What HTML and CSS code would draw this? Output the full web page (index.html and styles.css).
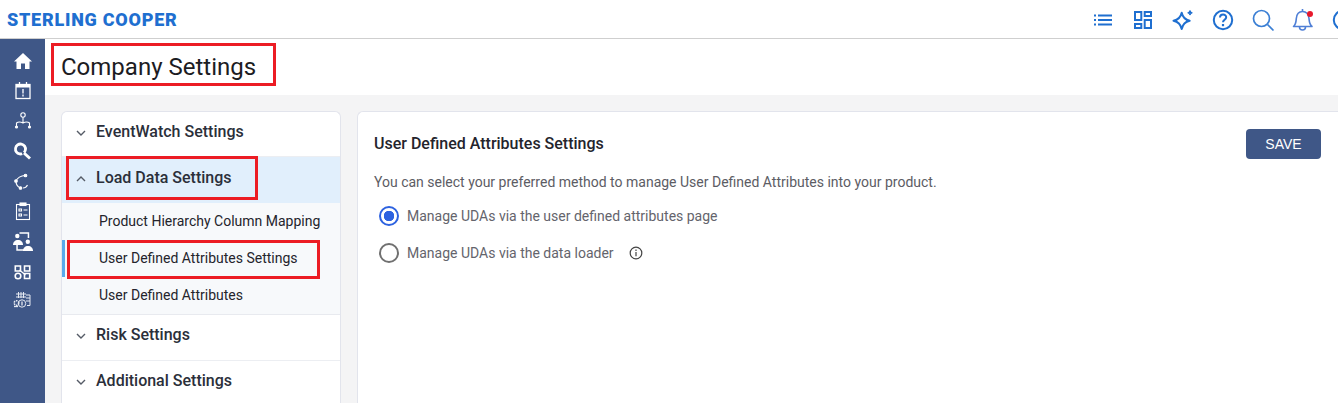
FILE: index.html
```html
<!DOCTYPE html>
<html lang="en">
<head>
    <meta charset="UTF-8">
    <meta name="viewport" content="width=device-width, initial-scale=1.0">
    <title>Company Settings</title>
    <link rel="stylesheet" href="styles.css">
</head>
<body>
    <!-- Top bar -->
    <header class="topbar">
        <div class="logo">STERLING COOPER</div>
        <div class="top-icons">
            <svg class="top-icon" viewBox="0 0 24 24"><path d="M3 7.500h2M7 7.500h14M3 12h2M7 12h14M3 16.500h2M7 16.500h14" fill="none" stroke="#1f6fd0" stroke-width="2"/></svg>
            <svg class="top-icon" viewBox="0 0 24 24" fill="none" stroke="#1f6fd0" stroke-width="2"><rect x="4" y="4" width="6.300" height="8"/><rect x="13.700" y="4" width="6.300" height="4"/><rect x="4" y="16" width="6.300" height="4"/><rect x="13.700" y="12" width="6.300" height="8"/></svg>
            <svg class="top-icon" viewBox="0 0 24 24"><path d="M10.700 4.700c1 4.500 3 7 8 8-5 1-7 3.500-8 8.300-1-4.800-3-7.300-8.200-8.300 5.200-1 7.200-3.500 8.200-8z" fill="none" stroke="#1f6fd0" stroke-width="2" stroke-linejoin="round"/><path d="M19 2.500l.8 1.500 1.500.8-1.500.8-.8 1.500-.8-1.500-1.500-.8 1.500-.8z" fill="#1f6fd0" stroke="#1f6fd0"/></svg>
            <svg class="top-icon" viewBox="0 0 24 24" fill="none" stroke="#1f6fd0" stroke-width="2"><circle cx="12" cy="12" r="9.200"/><path d="M9 9.500c0-4 6.200-4 6.200-.2 0 2.500-3.200 2.500-3.200 5"/><path d="M12 16v2.200" stroke-width="2.200"/></svg>
            <svg class="top-icon" viewBox="0 0 24 24" fill="none" stroke="#3b7fd4" stroke-width="1.700"><circle cx="10.500" cy="10.500" r="8"/><path d="M16.500 16.500l6 6"/></svg>
            <span class="bell">
                <svg class="top-icon" viewBox="0 0 24 24" fill="none" stroke="#4f7fd6" stroke-width="1.600"><path d="M2.500 18.500c2.500-2 2.500-4 2.800-8C5.700 6 8 3.500 11.500 3.500c3.500 0 6 2.500 6.500 7 .4 4 .4 6 3 8z" stroke-linejoin="round"/><path d="M8.500 19c0 4 6 4 6 0M11.500 1v2.500"/></svg>
                <i class="dot"></i>
            </span>
            <svg class="top-icon" viewBox="0 0 24 24" fill="none" stroke="#1f6fd0" stroke-width="2"><circle cx="12" cy="12" r="9.200"/></svg>
        </div>
    </header>

    <div class="app">
        <!-- Left nav -->
        <nav class="sidenav">
            <svg class="nav-icon" viewBox="0 0 20 20"><path d="M10 2L1 10.500h2.500V18h4.500v-5.500h4V18h4.500v-7.500H19z" fill="#fff"/></svg>
            <svg class="nav-icon" viewBox="0 0 20 20" fill="none" stroke="#fff" stroke-width="1.300"><rect x="3" y="3.500" width="14" height="14"/><path d="M3 5h14" stroke-width="3"/><path d="M6.500 1v3M13.500 1v3"/><path d="M10 8v4.500M10 13.500v2" stroke-width="1.700" stroke="#d5dbe8"/></svg>
            <svg class="nav-icon" viewBox="0 0 20 20" fill="none" stroke="#fff" stroke-width="1.100"><circle cx="10" cy="4" r="2.200"/><path d="M10 6.200v5.500M3.500 15v-3c2-1.500 4.500-1 6.500 0 2-1 4.500-1.500 6.500 0v3"/><circle cx="3.500" cy="16" r="1" fill="#fff"/><circle cx="16.500" cy="16" r="1" fill="#fff"/></svg>
            <svg class="nav-icon" viewBox="0 0 20 20" fill="none" stroke="#fff"><circle cx="7.500" cy="8" r="5" stroke-width="2.800" stroke-dasharray="26 2" transform="rotate(100 7.500 8)"/><path d="M11 12l6 5.500" stroke-width="3"/></svg>
            <svg class="nav-icon" viewBox="0 0 20 20" fill="none" stroke="#fff" stroke-width="1.100"><path d="M12 4.500C8 4.500 4 7 3 10c0 3 2 6 4.500 7M10 17c2 0 3.500-1 4.500-3"/><circle cx="12.500" cy="4.500" r="1.300" fill="#fff"/><circle cx="3" cy="10" r="1.300" fill="#fff"/><circle cx="7.500" cy="17" r="1.300" fill="#fff"/></svg>
            <svg class="nav-icon" viewBox="0 0 20 20" fill="none" stroke="#fff" stroke-width="1.100"><rect x="3.500" y="3.500" width="13" height="15"/><rect x="7" y="2" width="6" height="2.500" fill="#fff"/><path d="M6 8h2.500v2H6zM6 13h2.500v2H6zM10.500 9h4M10.500 14h4"/></svg>
            <svg class="nav-icon" viewBox="0 0 20 20" fill="#fff"><circle cx="4.300" cy="5" r="2.200"/><path d="M0 14c0-3 2-5 5-5s5 2 5 5z"/><circle cx="14.800" cy="10.700" r="2.200"/><path d="M10 20c0-3 2-5 5-5s5 2 5 5z"/><path d="M6.500 1.300h9.700v5.700h-1.500V2.800H6.500zM3.300 14h1.500v4.200H11v1.500H3.300z"/></svg>
            <svg class="nav-icon" viewBox="0 0 20 20" fill="none" stroke="#fff" stroke-width="1.600"><path d="M2.300 5h5.200v5H2.300zM11.500 5h5.200v5h-5.200zM11.500 12.500h5.200v5h-5.200z"/><circle cx="5" cy="15" r="2.800"/><path d="M6.500 9l6 5" stroke-width="1.300"/></svg>
            <svg class="nav-icon" viewBox="0 0 20 20" fill="none" stroke="#e6eaf2" stroke-width="1"><path d="M5.500 1v6M8 1v6M10.500 1v6M3 3h10M3 6h10"/><path d="M13 4h4v10.500h-3M13 7h4M13 10h4"/><circle cx="3.500" cy="12" r="2.300" stroke-dasharray="1.500 .8" stroke-width="1.500"/><circle cx="9" cy="12.500" r="3.700"/><path d="M9 10.500v4" stroke-width="1.300"/><path d="M1 15.500h4" stroke-width="1.300"/></svg>
        </nav>

        <main class="content">
            <div class="page-title"><h1>Company Settings</h1></div>

            <div class="settings">
                <!-- Accordion menu -->
                <aside class="menu">
                    <div class="menu-head">
                        <svg class="chev" viewBox="0 0 12 12"><path d="M2 4l4 4 4-4"/></svg>
                        EventWatch Settings
                    </div>
                    <div class="menu-head open">
                        <svg class="chev" viewBox="0 0 12 12"><path d="M2 8l4-4 4 4"/></svg>
                        Load Data Settings
                    </div>
                    <div class="submenu">
                        <div class="sub-item">Product Hierarchy Column Mapping</div>
                        <div class="sub-item active">User Defined Attributes Settings</div>
                        <div class="sub-item">User Defined Attributes</div>
                    </div>
                    <div class="menu-head">
                        <svg class="chev" viewBox="0 0 12 12"><path d="M2 4l4 4 4-4"/></svg>
                        Risk Settings
                    </div>
                    <div class="menu-head">
                        <svg class="chev" viewBox="0 0 12 12"><path d="M2 4l4 4 4-4"/></svg>
                        Additional Settings
                    </div>
                </aside>

                <!-- Settings panel -->
                <section class="panel">
                    <div class="panel-head">
                        <h2>User Defined Attributes Settings</h2>
                        <button class="save-btn">SAVE</button>
                    </div>
                    <p class="panel-desc">You can select your preferred method to manage User Defined Attributes into your product.</p>
                    <label class="radio-row"><span class="radio checked"></span>Manage UDAs via the user defined attributes page</label>
                    <label class="radio-row"><span class="radio"></span>Manage UDAs via the data loader
                        <svg class="info" viewBox="0 0 14 14" fill="none" stroke="#444" stroke-width="1.200"><circle cx="7" cy="7" r="5.800"/><path d="M7 6v4.200M7 3.500v1.500"/></svg>
                    </label>
                </section>
            </div>
        </main>
    </div>

    <!-- Red annotation boxes drawn over the screenshot -->
    <div class="mark mark-title"></div>
    <div class="mark mark-load"></div>
    <div class="mark mark-uda"></div>
</body>
</html>
```

FILE: styles.css
```css
/* Global Styles */
* { box-sizing: border-box; margin: 0; padding: 0; }
html, body { height: 403px; overflow: hidden; }
body {
    position: relative;
    font-family: Roboto, "Liberation Sans", sans-serif;
    color: #2b2b33;
    background: #fff;
}

/* Top bar */
.topbar {
    height: 39px;
    display: flex;
    justify-content: space-between;
    align-items: center;
    padding-left: 7px;
    border-bottom: 1px solid #cfcfcf;
    overflow: hidden;
}
.logo {
    font-size: 18px;
    font-weight: 900;
    letter-spacing: 0.75px;
    color: #1f6fd0;
}
.top-icons {
    display: flex;
    align-items: center;
    gap: 16px;
    margin-right: -17px;
    padding-top: 2px;
}
.top-icon { display: block; width: 24px; height: 24px; }
.bell { position: relative; display: block; }
.dot {
    position: absolute;
    top: 3px;
    right: 2px;
    width: 6px;
    height: 6px;
    border-radius: 50%;
    background: #e8192c;
}

.app { display: flex; height: 364px; }

/* Left nav */
.sidenav {
    width: 45px;
    flex-shrink: 0;
    background: #3f5787;
    display: flex;
    flex-direction: column;
    align-items: center;
    gap: 10px;
    padding-top: 12px;
}
.nav-icon { display: block; width: 20px; height: 20px; }

.content { flex: 1; background: #f4f4f5; min-width: 0; }
.page-title {
    height: 56px;
    background: #fff;
    display: flex;
    align-items: center;
    padding-left: 16px;
}
h1 { font-size: 24px; font-weight: 400; color: #1c1c22; }

.settings {
    display: flex;
    gap: 16px;
    padding: 16px 0 0 16px;
}

/* Accordion menu */
.menu {
    width: 280px;
    height: 292px;
    flex-shrink: 0;
    overflow: hidden;
    background: #fff;
    border: 1px solid #e2e4ec;
    border-bottom: none;
    border-radius: 6px 6px 0 0;
}
.menu-head {
    height: 46px;
    display: flex;
    align-items: center;
    gap: 9px;
    padding: 0 0 6px 13px;
    font-size: 16px;
    font-weight: 500;
    color: #2b2f3a;
    border-bottom: 1px solid #eceef2;
}
.menu-head:first-child { height: 45px; }
.menu-head:last-child { height: 42px; border-bottom: none; padding-bottom: 3px; }
.menu-head.open { background: #e1effc; border-bottom: none; }
.chev {
    width: 12px;
    height: 12px;
    margin-top: 3px;
    fill: none;
    stroke: #555b66;
    stroke-width: 1.400;
    flex-shrink: 0;
}
.submenu { background: #f7f9fb; border-bottom: 1px solid #e8eaef; }
.sub-item {
    position: relative;
    height: 37px;
    display: flex;
    align-items: center;
    padding: 0 0 2px 37px;
    font-size: 14px;
    color: #24242c;
}
.sub-item.active::before {
    content: "";
    position: absolute;
    left: 0;
    top: 0;
    width: 3px;
    height: 37px;
    background: #5aa9ec;
}

/* Settings panel */
.panel {
    flex: 1;
    height: 292px;
    background: #fff;
    border: 1px solid #e2e4ec;
    border-right: none;
    border-bottom: none;
    border-radius: 6px 0 0 0;
    padding: 16px 17px 0 16px;
}
.panel-head {
    display: flex;
    justify-content: space-between;
    align-items: center;
    height: 32px;
    margin-bottom: 14px;
}
h2 { font-size: 16px; font-weight: 500; color: #24242c; padding-bottom: 2px; }
.save-btn {
    width: 75px;
    height: 30px;
    background: #3f5787;
    color: #fff;
    border: none;
    border-radius: 4px;
    font-family: "Liberation Sans", sans-serif;
    font-size: 14px;
}
.panel-desc { font-size: 14px; color: #5c5c64; margin-bottom: 7px; }
.radio-row {
    height: 37px;
    display: flex;
    align-items: center;
    padding-left: 5px;
    font-size: 14px;
    color: #64646c;
}
.radio {
    width: 20px;
    height: 20px;
    margin-right: 8px;
    border: 2px solid #707070;
    border-radius: 50%;
    background: #fff;
}
.radio.checked {
    border-color: #2d62e0;
    background: radial-gradient(circle, #2d62e0 0 5px, #fff 5.500px);
}
.info { width: 14px; height: 14px; margin-left: 15px; }

/* Annotation boxes */
.mark { position: absolute; border: 3px solid #ec1c24; }
.mark-title { left: 51px; top: 43px; width: 225px; height: 43px; }
.mark-load { left: 66px; top: 156px; width: 192px; height: 44px; }
.mark-uda { left: 67px; top: 240px; width: 253px; height: 39px; }
```
